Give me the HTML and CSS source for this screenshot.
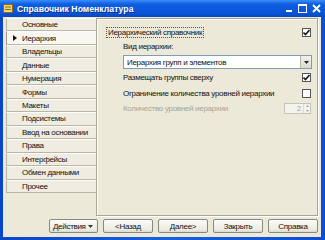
FILE: index.html
```html
<!DOCTYPE html>
<html lang="ru">
<head>
  <meta charset="UTF-8" />
  <title>Справочник Номенклатура</title>
  <link rel="stylesheet" href="styles.css">
</head>
<body>
  <div class="window">
    <!-- Заголовок окна -->
    <div class="titlebar">
      <svg class="app-icon" width="10" height="9" viewBox="0 0 10 9">
        <rect x="0.5" y="0.5" width="9" height="8" fill="#f7d774" stroke="#8a6a10"/>
        <rect x="2" y="2.5" width="6" height="1" fill="#8a6a10"/>
        <rect x="2" y="5" width="6" height="1" fill="#8a6a10"/>
      </svg>
      <span class="title">Справочник Номенклатура</span>
      <div class="controls">
        <svg width="8" height="9" viewBox="0 0 8 9"><rect x="1" y="6" width="6" height="2" fill="#fff"/></svg>
        <svg width="9" height="9" viewBox="0 0 9 9"><rect x="0.5" y="0.5" width="8" height="8" fill="none" stroke="#fff"/><rect x="0" y="0" width="9" height="2" fill="#fff"/></svg>
        <svg width="9" height="9" viewBox="0 0 9 9"><path d="M1 1 L8 8 M8 1 L1 8" stroke="#fff" stroke-width="1.8"/></svg>
      </div>
    </div>

    <div class="client">
      <div class="main">
        <!-- Закладки -->
        <ul class="tabs">
          <li>Основные</li>
          <li class="active">Иерархия</li>
          <li>Владельцы</li>
          <li>Данные</li>
          <li>Нумерация</li>
          <li>Формы</li>
          <li>Макеты</li>
          <li>Подсистемы</li>
          <li>Ввод на основании</li>
          <li>Права</li>
          <li>Интерфейсы</li>
          <li>Обмен данными</li>
          <li>Прочее</li>
        </ul>

        <!-- Страница -->
        <div class="panel">
          <div class="row r1">
            <span class="label focus">Иерархический справочник</span>
            <span class="check on"><svg width="7" height="7" viewBox="0 0 7 7"><path d="M0.5 3.5 L2.5 5.5 L6.5 1" fill="none" stroke="#1a1a1a" stroke-width="1.6"/></svg></span>
          </div>
          <div class="row sub r2">
            <span class="label">Вид иерархии:</span>
          </div>
          <div class="row sub r3">
            <div class="select">
              <span class="value">Иерархия групп и элементов</span>
              <span class="drop"><svg width="5" height="3" viewBox="0 0 5 3"><path d="M0 0 H5 L2.5 3 Z" fill="#222"/></svg></span>
            </div>
          </div>
          <div class="row sub r4">
            <span class="label">Размещать группы сверху</span>
            <span class="check on"><svg width="7" height="7" viewBox="0 0 7 7"><path d="M0.5 3.5 L2.5 5.5 L6.5 1" fill="none" stroke="#1a1a1a" stroke-width="1.6"/></svg></span>
          </div>
          <div class="row sub r5">
            <span class="label">Ограничение количества уровней иерархии</span>
            <span class="check"></span>
          </div>
          <div class="row sub r6">
            <span class="label disabled">Количество уровней иерархии</span>
            <div class="spin">
              <span class="num">2</span>
              <span class="arrows">
                <svg width="3" height="2" viewBox="0 0 3 2"><path d="M0 2 H3 L1.5 0 Z" fill="#a8a69a"/></svg>
                <svg width="3" height="2" viewBox="0 0 3 2"><path d="M0 0 H3 L1.5 2 Z" fill="#a8a69a"/></svg>
              </span>
            </div>
          </div>
        </div>
      </div>

      <!-- Кнопки -->
      <div class="buttons">
        <button class="btn menu"><span>Действия</span><svg width="5" height="3" viewBox="0 0 5 3"><path d="M0 0 H5 L2.5 3 Z" fill="#333"/></svg></button>
        <button class="btn">&lt;Назад</button>
        <button class="btn">Далее&gt;</button>
        <button class="btn">Закрыть</button>
        <button class="btn">Справка</button>
      </div>
    </div>
  </div>
</body>
</html>
```

FILE: styles.css
```css
* { box-sizing: border-box; margin: 0; padding: 0; }
html, body { width: 325px; height: 240px; overflow: hidden; }
body { font-family: "Liberation Sans", Arial, sans-serif; font-size: 8px; letter-spacing: -0.3px; color: #111; }

.window {
  width: 325px; height: 240px; display: flex; flex-direction: column;
  background: linear-gradient(to right, #0846c8, #1660e0 50%, #0a4fd4);
}

/* Заголовок */
.titlebar {
  height: 17px; display: flex; align-items: center; padding: 0 4px 0 3px;
  background: linear-gradient(to bottom, #3b8df7 0%, #0d5ee2 25%, #0a55d8 75%, #0747c4 100%);
}
.app-icon { margin-right: 4px; }
.title { color: #fff; font-weight: bold; font-size: 8.7px; letter-spacing: 0; flex: 1; text-shadow: 1px 1px 0 #0a2f8a; }
.controls { display: flex; align-items: center; gap: 5px; }

/* Рабочая область */
.client {
  flex: 1; margin: 0 4px 3px 3px; background: #ece9d8;
  display: flex; flex-direction: column; padding: 1px 3px 0 3px;
}
.main { display: flex; height: 198px; }

/* Закладки */
.tabs {
  list-style: none; width: 90px; height: 175px;
  display: grid; grid-template-rows: repeat(13, 1fr);
}
.tabs li {
  position: relative; display: flex; align-items: center; padding-left: 15px;
  border: 1px solid #b9b6a6; border-top-color: #fdfdf9; border-right: none;
  background: #efede2; white-space: nowrap;
}
.tabs li.active { background: #f8f7f1; border-left-color: #9d9a8a; }
.tabs li.active::before {
  content: ""; position: absolute; left: 6px; top: 50%; margin-top: -3px;
  border-left: 4px solid #111; border-top: 3px solid transparent; border-bottom: 3px solid transparent;
}

.panel {
  flex: 1; border: 1px solid #a9a695; box-shadow: inset 1px 1px 0 #fff, 1px 1px 0 #fff;
  padding: 6px 5px 0 11px; display: flex; flex-direction: column;
}

.row { display: flex; align-items: center; justify-content: space-between; height: 14px; }
.sub { padding-left: 15px; }
.r3 { height: 14px; margin-top: 2px; padding-left: 15px; padding-right: 0; }
.r4 { height: 15px; margin-top: 1px; }
.r5 { height: 15px; margin-top: 1px; }
.r6 { height: 15px; }

.label { white-space: nowrap; }
.label.focus { outline: 1px dotted #555; outline-offset: 0; padding: 0 1px; margin-left: -1px; }
.label.disabled { color: #a7a596; }

.check {
  width: 9px; height: 9px; background: #fff; border: 1px solid #555;
  display: flex; align-items: center; justify-content: center; margin-right: 1px;
}

.select {
  flex: 1; height: 14px; background: #fff; border: 1px solid #7f9db9;
  display: flex; align-items: center; margin-right: 0;
}
.select .value { flex: 1; padding-left: 3px; }
.select .drop {
  width: 11px; height: 12px; background: linear-gradient(#f2f1ea, #dcdacd); border-left: 1px solid #b9b6a6;
  display: flex; align-items: center; justify-content: center;
}

.spin {
  width: 27px; height: 11px; border: 1px solid #c6c4b6; background: #f4f3ee;
  display: flex; align-items: center; margin-right: 1px;
}
.spin .num { flex: 1; text-align: right; color: #a7a596; padding-right: 2px; }
.spin .arrows {
  width: 7px; height: 9px; display: flex; flex-direction: column; align-items: center;
  justify-content: space-around; border-left: 1px solid #dddbd0;
}

/* Кнопки */
.buttons { display: flex; justify-content: flex-end; gap: 5px; margin-top: 3px; padding-right: 0; }
.btn {
  width: 50px; height: 14px; font: inherit; letter-spacing: inherit; color: #111;
  background: linear-gradient(to bottom, #fbfbf8, #ecebe4 80%, #dcdacf);
  border: 1px solid #8a8980; border-radius: 2px;
  display: flex; align-items: center; justify-content: center;
}
.btn.menu { width: 49px; justify-content: space-between; padding: 0 4px 0 3px; }
```
